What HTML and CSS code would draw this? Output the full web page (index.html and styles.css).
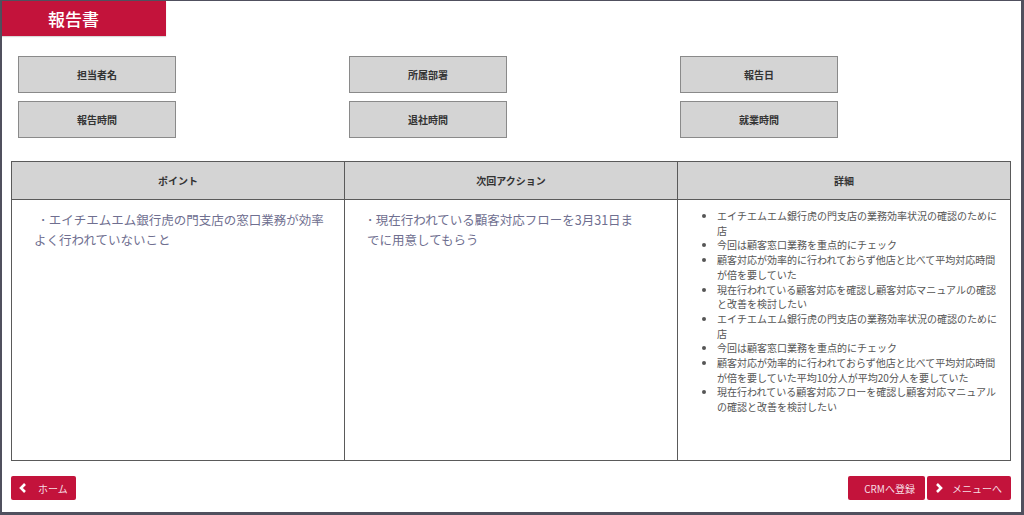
FILE: index.html
```html
<!DOCTYPE html>
<html lang="ja">
<head>
  <meta charset="UTF-8">
  <meta name="viewport" content="width=device-width, initial-scale=1.0">
  <title>報告書</title>

  <link rel="stylesheet" href="styles.css">

</head>
<body>
  <div class="frame">
    <h1 class="banner">報告書</h1>

    <div class="info">
      <div class="info-box">担当者名</div>
      <div class="info-box">所属部署</div>
      <div class="info-box">報告日</div>
      <div class="info-box">報告時間</div>
      <div class="info-box">退社時間</div>
      <div class="info-box">就業時間</div>
    </div>

    <table class="report">
      <thead>
        <tr>
          <th>ポイント</th>
          <th>次回アクション</th>
          <th>詳細</th>
        </tr>
      </thead>
      <tbody>
        <tr>
          <td>
            <p class="memo first">･&thinsp;エイチエムエム銀行虎の門支店の窓口業務が効率<br>よく行われていないこと</p>
          </td>
          <td>
            <p class="memo">･&thinsp;現在行われている顧客対応フローを3月31日ま<br>でに用意してもらう</p>
          </td>
          <td>
            <ul class="details">
              <li>エイチエムエム銀行虎の門支店の業務効率状況の確認のために店</li>
              <li>今回は顧客窓口業務を重点的にチェック</li>
              <li>顧客対応が効率的に行われておらず他店と比べて平均対応時間が倍を要していた</li>
              <li>現在行われている顧客対応を確認し顧客対応マニュアルの確認と改善を検討したい</li>
              <li>エイチエムエム銀行虎の門支店の業務効率状況の確認のために店</li>
              <li>今回は顧客窓口業務を重点的にチェック</li>
              <li>顧客対応が効率的に行われておらず他店と比べて平均対応時間が倍を要していた平均10分人が平均20分人を要していた</li>
              <li>現在行われている顧客対応フローを確認し顧客対応マニュアルの確認と改善を検討したい</li>
            </ul>
          </td>
        </tr>
      </tbody>
    </table>

    <div class="footer">
      <button class="red-button home-button">
        <svg width="8" height="10" viewBox="0 0 8 10"><polyline points="6,1 2,5 6,9" fill="none" stroke="#fff" stroke-width="2.6"/></svg>
        ホーム
      </button>
      <div class="right-buttons">
        <button class="red-button crm-button">CRMへ登録</button>
        <button class="red-button menu-button">
          <svg width="8" height="10" viewBox="0 0 8 10"><polyline points="2,1 6,5 2,9" fill="none" stroke="#fff" stroke-width="2.6"/></svg>
          メニューへ
        </button>
      </div>
    </div>
  </div>
</body>
</html>
```

FILE: styles.css
```css
body {
    margin: 0;
    font-family: "Noto Sans CJK JP", "Liberation Sans", sans-serif;
    background-color: white;
}

.frame {
    box-sizing: border-box;
    width: 1024px;
    height: 515px;
    border-style: solid;
    border-color: #50505e;
    border-width: 1px 3px 3px 2px;
}

.banner {
    margin: 0;
    width: 164px;
    height: 35px;
    box-sizing: border-box;
    padding-left: 46px;
    background-color: #c3133b;
    color: white;
    font-size: 17px;
    font-weight: 500;
    line-height: 35px;
    box-shadow: 0 1px 1px rgba(0, 0, 0, 0.15);
}

.info {
    display: grid;
    grid-template-columns: repeat(3, 331px);
    row-gap: 8px;
    margin-top: 20px;
    padding-left: 16px;
}

.info-box {
    box-sizing: border-box;
    width: 158px;
    height: 37px;
    background-color: #d4d4d4;
    border: 1px solid #8a8a8a;
    color: #333;
    font-size: 10px;
    font-weight: bold;
    line-height: 35px;
    text-align: center;
}

.report {
    margin: 23px 0 0 9px;
    width: 1000px;
    height: 300px;
    border-collapse: collapse;
    table-layout: fixed;
}

.report th,
.report td {
    border: 1px solid #5a5a5a;
    padding: 0;
}

.report th {
    height: 37px;
    background-color: #d4d4d4;
    color: #333;
    font-size: 10px;
    font-weight: bold;
}

.report td {
    vertical-align: top;
}

.memo {
    margin: 10px 0 0 0;
    padding-left: 22px;
    color: #6f6f90;
    font-size: 12.5px;
    line-height: 20px;
}

.memo.first {
    text-indent: 6px;
}

.details {
    margin: 9px 0 0 0;
    padding: 0 8px 0 39px;
    color: #555;
    font-size: 10px;
    line-height: 14.7px;
}

.footer {
    display: flex;
    justify-content: space-between;
    margin: 15px 0 0 9px;
    width: 1000px;
}

.right-buttons {
    display: flex;
    gap: 2px;
}

.red-button {
    display: flex;
    align-items: center;
    height: 24px;
    border: none;
    border-radius: 2px;
    background-color: #c3133b;
    color: #f6dde3;
    font-family: "Noto Sans CJK JP", sans-serif;
    font-size: 10px;
    padding: 0;
    cursor: pointer;
}

.home-button {
    width: 65px;
    padding-left: 8px;
    gap: 11px;
}

.crm-button {
    width: 77px;
    justify-content: flex-end;
    padding-right: 10px;
}

.menu-button {
    width: 84px;
    padding-left: 8px;
    gap: 9px;
}
```
